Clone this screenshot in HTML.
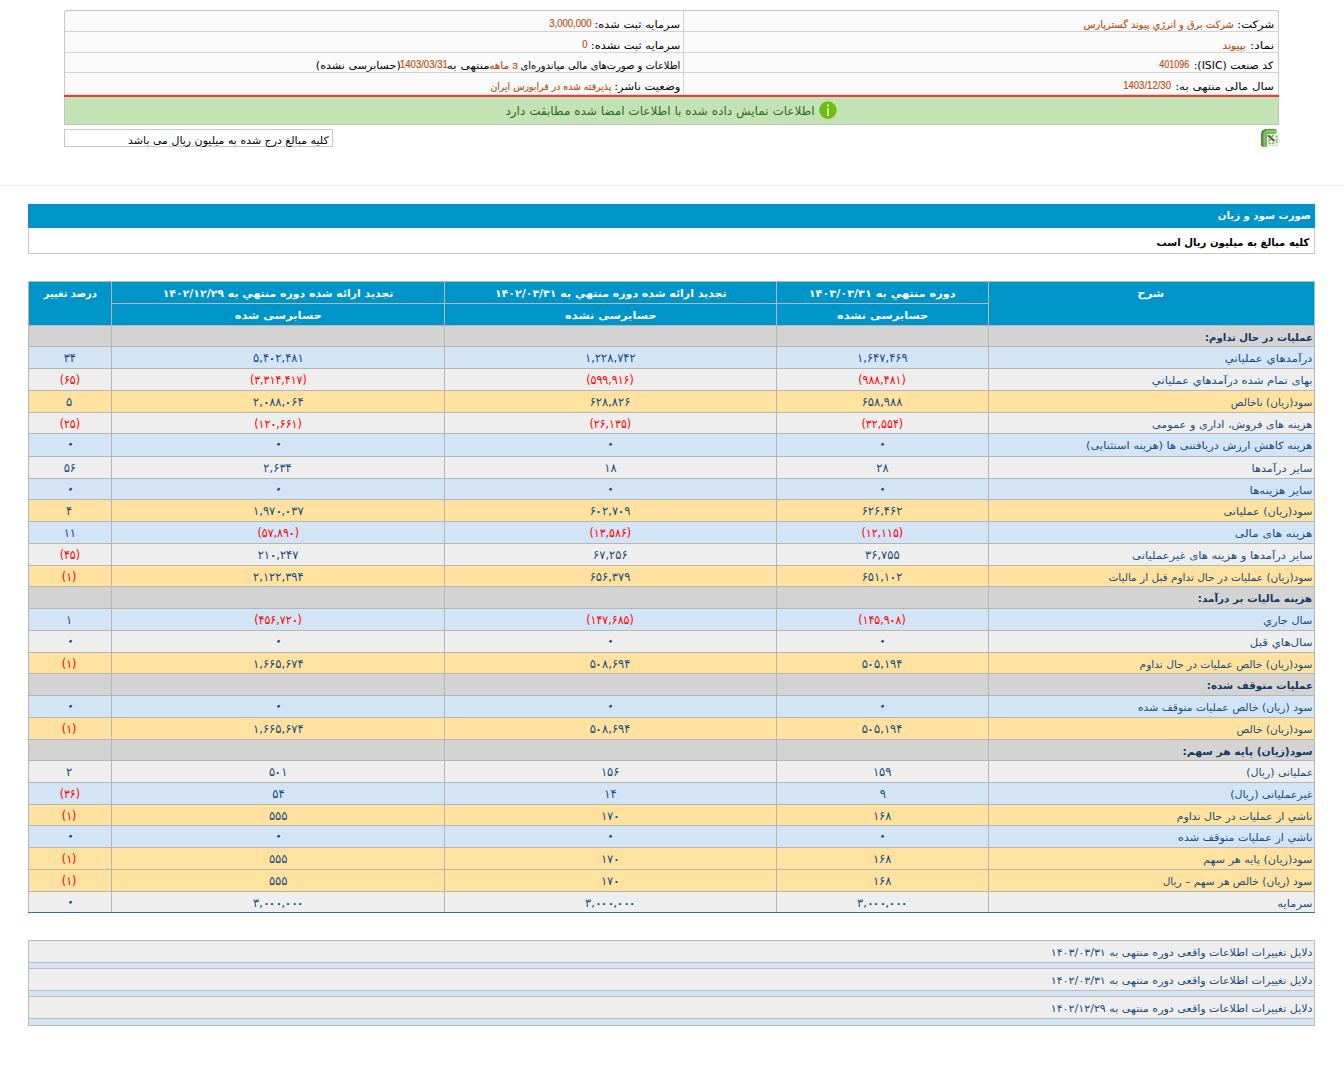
<!DOCTYPE html>
<html lang="fa" dir="rtl">
<head>
<meta charset="utf-8">
<title>صورت سود و زیان</title>
<style>
html,body{margin:0;padding:0;background:#fff}
body{width:1344px;height:1076px;position:relative;overflow:hidden;direction:rtl;
 font-family:"DejaVu Sans","Liberation Sans",sans-serif;font-size:11px;color:#000}
.abs{position:absolute;box-sizing:border-box}
.f{display:inline-block;white-space:nowrap;transform-origin:50% 50%}
.lat{font-family:"Liberation Sans","DejaVu Sans",sans-serif}
#info{left:64px;top:10px;width:1215px;height:85px;border:1px solid #c9c9c9;border-bottom-color:#d9d9d9;border-radius:3px 3px 0 0;background:#fafafa}
#info .r{position:absolute;left:0;right:0;height:1px;background:#d4d4d4}
#info .c{position:absolute;white-space:nowrap;line-height:20px;height:20px}
#info .l{font-size:10.2px;color:#000}
#info .v{color:#bd4b0c;font-size:10px;-webkit-text-stroke:0.15px #bd4b0c}
#info .v.n{font-size:10.6px}
#red{left:64px;top:95px;width:1215px;height:2px;background:#f03a3a}
#ok{left:64px;top:97px;width:1215px;height:28px;background:#c3e3b5;border:1px solid #c2c2c2;border-top:0;font-size:11.6px;color:#2a6a1c}
#ok .c{position:absolute;left:0;top:0;width:1213px;height:27px;line-height:28px;text-align:center}
#ok svg{position:absolute;left:754px;top:4px}
#note{left:64px;top:129px;width:269px;height:18px;border:1px solid #c6c6c6;background:#fff;font-size:10.4px;line-height:20px;text-align:center}
#xl{left:1261px;top:129px}
#hr{left:0;top:185px;width:1344px;height:1px;background:#ececec}
#title{left:28px;top:204px;width:1287px;height:24px;background:#0095c9;color:#fff;font-weight:bold;font-size:10.4px;line-height:23px;text-align:center}
#sub{left:28px;top:228px;width:1287px;height:26px;background:#fff;border:1px solid #c8c8c8;border-top:0;font-weight:bold;font-size:10.4px;line-height:28px;text-align:center}
#grid{left:28px;top:281px;width:1287px;background:#b6b6b6}
#grid .cell{position:absolute;box-sizing:border-box;white-space:nowrap;text-align:center;color:#184b7c;font-size:10.2px}
#grid .th{background:#0095c9;color:#fff;font-weight:bold;font-size:10.4px}
#grid .h{background:#d3d3d3}
#grid .h.d{font-weight:bold;color:#12395f}
#grid .b{background:#d3e4f5}
#grid .g{background:#eeeeee}
#grid .y{background:#ffe29f}
#grid .neg{color:#ff0000}
#grid .n{font-size:10.2px;direction:ltr;unicode-bidi:isolate}
#grid .zz{display:inline-block;transform:scale(1.5,1.3)}
#grid .z{font-size:11.8px;transform:translate(0.6px,-1.4px) scale(1.8) rotate(45deg)}
#grid .bl{position:absolute;left:0;width:1287px;height:1px;background:#2a70ab}
#rs{left:28px;top:940px;width:1287px;height:86px;background:#bdbdbd}
#rs div{position:absolute;left:1px;right:1px;box-sizing:border-box}
#rs .t{background:#eeeeee;color:#184b7c;font-size:10.2px;text-align:center;white-space:nowrap}
#rs .s{background:#d3e4f5}
</style>
</head>
<body>
<div id="info" class="abs">
<div class="r" style="top:20px"></div><div class="r" style="top:41px"></div><div class="r" style="top:61px"></div>
<div class="abs" style="left:618px;top:0;width:1px;height:83px;background:#d4d4d4"></div>
<div class="c l" style="left:0;width:1213px;top:0px;height:20px;line-height:27px;text-align:center"><span id="i1l" class="f " style="transform:translateX(584.52px) scaleX(1.1343)">شرکت:</span></div>
<div class="c v" style="left:0;width:1213px;top:0px;height:20px;line-height:27px;text-align:center"><span id="i1v" class="f " style="transform:translateX(487.15px) scaleX(0.9818)">شرکت برق و انرژي پيوند گسترپارس</span></div>
<div class="c l" style="left:0;width:1213px;top:21px;height:20px;line-height:27px;text-align:center"><span id="i2l" class="f " style="transform:translateX(590.16px) scaleX(1.2143)">نماد:</span></div>
<div class="c v" style="left:0;width:1213px;top:21px;height:20px;line-height:27px;text-align:center"><span id="i2v" class="f " style="transform:translateX(563.27px) scaleX(1.0616)">بپیوند</span></div>
<div class="c l" style="left:0;width:1213px;top:42px;height:19px;line-height:25px;text-align:center"><span id="i3l" class="f " style="transform:translateX(562.31px) scaleX(1.0707)">کد صنعت (ISIC):</span></div>
<div class="c v n" style="left:0;width:1213px;top:42px;height:19px;line-height:25px;text-align:center"><span id="i3v" class="f lat" style="transform:translate(502.52px,-1.1px) scaleX(0.8428)">401096</span></div>
<div class="c l" style="left:0;width:1213px;top:62px;height:21px;line-height:27px;text-align:center"><span id="i4l" class="f " style="transform:translateX(552.80px) scaleX(1.1560)">سال مالی منتهی به:</span></div>
<div class="c v n" style="left:0;width:1213px;top:62px;height:21px;line-height:27px;text-align:center"><span id="i4v" class="f lat" style="transform:translate(475.56px,-1.1px) scaleX(0.9013)">1403/12/30</span></div>
<div class="c l" style="left:0;width:1213px;top:0px;height:20px;line-height:27px;text-align:center"><span id="j1l" class="f " style="transform:translateX(-33.78px) scaleX(1.1256)">سرمایه ثبت شده:</span></div>
<div class="c v n" style="left:0;width:1213px;top:0px;height:20px;line-height:27px;text-align:center"><span id="j1v" class="f lat" style="transform:translate(-101.12px,-1.1px) scaleX(0.8982)">3,000,000</span></div>
<div class="c l" style="left:0;width:1213px;top:21px;height:20px;line-height:27px;text-align:center"><span id="j2l" class="f " style="transform:translateX(-36.17px) scaleX(1.1271)">سرمایه ثبت نشده:</span></div>
<div class="c v n" style="left:0;width:1213px;top:21px;height:20px;line-height:27px;text-align:center"><span id="j2v" class="f lat" style="transform:translate(-87.16px,-1.1px) scaleX(0.8982)">0</span></div>
<div class="c l" style="left:0;width:1213px;top:42px;height:19px;line-height:25px;text-align:center"><span id="j3a" class="f " style="transform:translateX(-70.88px) scaleX(0.9724)">اطلاعات و صورت‌های مالی میاندوره‌ای</span></div>
<div class="c v" style="left:0;width:1213px;top:42px;height:19px;line-height:25px;text-align:center"><span id="j3b" class="f " style="transform:translateX(-168.22px) scaleX(1.0405)"><span class="lat" style="font-size:9.8px">3</span> ماهه</span></div>
<div class="c l" style="left:0;width:1213px;top:42px;height:19px;line-height:25px;text-align:center"><span id="j3c" class="f " style="transform:translateX(-202.92px) scaleX(1.1869)">منتهی به</span></div>
<div class="c v n" style="left:0;width:1213px;top:42px;height:19px;line-height:25px;text-align:center"><span id="j3d" class="f lat" style="transform:translate(-247.65px,-1.1px) scaleX(0.9026)">1403/03/31</span></div>
<div class="c l" style="left:0;width:1213px;top:42px;height:19px;line-height:25px;text-align:center"><span id="j3e" class="f " style="transform:translateX(-313.58px) scaleX(1.0917)">(حسابرسی نشده)</span></div>
<div class="c l" style="left:0;width:1213px;top:62px;height:21px;line-height:27px;text-align:center"><span id="j4l" class="f " style="transform:translateX(-23.93px) scaleX(1.1326)">وضعیت ناشر:</span></div>
<div class="c v" style="left:0;width:1213px;top:62px;height:21px;line-height:27px;text-align:center"><span id="j4v" class="f " style="transform:translateX(-120.94px) scaleX(0.9330)">پذیرفته شده در فرابورس ایران</span></div>
</div>
<div id="red" class="abs"></div>
<div id="ok" class="abs"><div class="c"><span id="tok" class="f " style="transform:translateX(-11.02px) scaleX(1.0371)">اطلاعات نمایش داده شده با اطلاعات امضا شده مطابقت دارد</span></div><svg width="19" height="19" viewBox="0 0 19 19"><circle cx="8.9" cy="9.1" r="8.8" fill="#6dbd14"/><rect x="8" y="7.1" width="1.8" height="8" rx="0.9" fill="#fff" fill-opacity="0.88"/><circle cx="8.9" cy="4.4" r="1.05" fill="#fff" fill-opacity="0.9"/></svg></div>
<div id="note" class="abs"><span id="tnote" class="f " style="transform:translateX(29.44px) scaleX(1.0564)">کلیه مبالغ درج شده به میلیون ریال می باشد</span></div>
<svg id="xl" class="abs" width="18" height="18" viewBox="0 0 18 18">
<rect x="5.2" y="4.4" width="12.6" height="13.4" fill="#e6f9dc"/>
<path d="M0.2 16.6 V5.4 Q0.2 0.3 5.4 0.3 H14.2 Q16.4 0.6 15.6 2.8 Q15 4.6 13.6 4.6 H6.6 Q5.5 4.6 5.5 6 V17.7 H1.6 Q0.2 17.7 0.2 16.6Z" fill="#3f8e20"/>
<path d="M1.5 17.7 V5.6 Q1.6 1.6 5.6 1.5 H15.9 Q15.9 2.2 15.6 2.8 Q15 4.6 13.6 4.6 H6.6 Q5.5 4.6 5.5 6 V17.7Z" fill="#64a948"/>
<path d="M2.8 17.7 V5.8 Q2.9 2.6 5.8 2.5 H15.7 Q15 4.6 13.6 4.6 H6.6 Q5.5 4.6 5.5 6 V17.7Z" fill="#86c170"/>
<path d="M4.2 17.7 V6 Q4.3 3.6 6.2 3.5 H15.2 Q14.6 4.6 13.6 4.6 H6.6 Q5.5 4.6 5.5 6 V17.7Z" fill="#74aa5d"/>
<path d="M5.4 1.2 H15.6 Q15.9 2 15.7 2.5 H5.4Z" fill="#a3d88f"/>
<path d="M0.6 16.8 V5.4 Q0.7 0.8 5.4 0.7 H14.4" fill="none" stroke="#3a7a1e" stroke-width="0.8" stroke-opacity="0.8"/>
<path d="M7.6 6.8 L12.8 11.6" stroke="#48693a" stroke-width="2.1" stroke-linecap="round"/>
<path d="M12 6.6 L10.6 8 M9.2 10.4 L7.8 11.8" stroke="#7d9b70" stroke-width="1.4" stroke-linecap="round"/>
<path d="M14.6 7.6 h2.2 M14.6 10.4 h2.2 M14.6 13.2 h2.2 M7.6 14.2 h2.2 M10.8 14.2 h2.4" stroke="#94ac88" stroke-width="1.5"/>
<path d="M7.6 16.4 h2.2 M10.8 16.4 h2.4 M14.6 16.2 h2.2" stroke="#cfdccb" stroke-width="1.2"/>
</svg>
<div id="hr" class="abs"></div>
<div id="title" class="abs"><span id="ttitle" class="f " style="transform:translateX(592.77px) scaleX(0.9771)">صورت سود و زیان</span></div>
<div id="sub" class="abs"><span id="tsub" class="f " style="transform:translateX(561.46px) scaleX(0.9731)">کلیه مبالغ به میلیون ریال است</span></div>
<div id="grid" class="abs" style="height:632px">
<div class="cell th" style="left:961px;top:1px;width:325px;height:43px;line-height:22px"><span id="hd" class="f " style="transform:translateX(-0.29px) scaleX(1.1133)">شرح</span></div>
<div class="cell th" style="left:749px;top:1px;width:211px;height:21px;line-height:22px"><span id="h1a" class="f " style="transform:translateX(-0.71px) scaleX(1.0824)">دوره منتهي به ۱۴۰۳/۰۳/۳۱</span></div>
<div class="cell th" style="left:749px;top:23px;width:211px;height:21px;line-height:22px"><span id="h1b" class="f " style="transform:translateX(-0.07px) scaleX(1.0955)">حسابرسی نشده</span></div>
<div class="cell th" style="left:417px;top:1px;width:331px;height:21px;line-height:22px"><span id="h2a" class="f " style="transform:translateX(0.02px) scaleX(1.0558)">تجدید ارائه شده دوره منتهي به ۱۴۰۲/۰۳/۳۱</span></div>
<div class="cell th" style="left:417px;top:23px;width:331px;height:21px;line-height:22px"><span id="h2b" class="f " style="transform:translateX(0.15px) scaleX(1.0984)">حسابرسی نشده</span></div>
<div class="cell th" style="left:84px;top:1px;width:332px;height:21px;line-height:22px"><span id="h3a" class="f " style="transform:translateX(0.30px) scaleX(1.0511)">تجدید ارائه شده دوره منتهي به ۱۴۰۲/۱۲/۲۹</span></div>
<div class="cell th" style="left:84px;top:23px;width:332px;height:21px;line-height:22px"><span id="h3b" class="f " style="transform:translateX(0.70px) scaleX(1.1030)">حسابرسی شده</span></div>
<div class="cell th" style="left:1px;top:1px;width:82px;height:43px;line-height:22px"><span id="hp" class="f " style="transform:translateX(0.53px) scaleX(0.9528)">درصد تغییر</span></div>
<div class="cell h d" style="left:961px;top:45px;width:325px;height:20px;line-height:23px"><span id="d0" class="f " style="transform:translateX(107.42px) scaleX(0.9881)">عملیات در حال تداوم:</span></div>
<div class="cell h" style="left:749px;top:45px;width:211px;height:20px;line-height:23px"></div>
<div class="cell h" style="left:417px;top:45px;width:331px;height:20px;line-height:23px"></div>
<div class="cell h" style="left:84px;top:45px;width:332px;height:20px;line-height:23px"></div>
<div class="cell h" style="left:1px;top:45px;width:82px;height:20px;line-height:23px"></div>
<div class="cell b d" style="left:961px;top:66px;width:325px;height:21px;line-height:23px"><span id="d1" class="f " style="transform:translateX(116.73px) scaleX(1.1592)">درآمدهاي عملياتي</span></div>
<div class="cell b" style="left:749px;top:66px;width:211px;height:21px;line-height:23px"><span class="f n" style="transform:translate(0.0px,-0.7px) scale(1.130,1.15)">۱,۶۴۷,۴۶۹</span></div>
<div class="cell b" style="left:417px;top:66px;width:331px;height:21px;line-height:23px"><span class="f n" style="transform:translate(0.0px,-0.7px) scale(1.130,1.15)">۱,۲۲۸,۷۴۲</span></div>
<div class="cell b" style="left:84px;top:66px;width:332px;height:21px;line-height:23px"><span class="f n" style="transform:translate(0.0px,-0.7px) scale(1.130,1.15)">۵,۴<span class="zz">۰</span>۲,۴۸۱</span></div>
<div class="cell b" style="left:1px;top:66px;width:82px;height:21px;line-height:23px"><span class="f n" style="transform:translate(-0.6px,-0.7px) scale(1.130,1.15)">۳۴</span></div>
<div class="cell g d" style="left:961px;top:88px;width:325px;height:21px;line-height:23px"><span id="d2" class="f " style="transform:translateX(80.52px) scaleX(1.1377)">بهای تمام شده درآمدهاي عملياتي</span></div>
<div class="cell g neg" style="left:749px;top:88px;width:211px;height:21px;line-height:23px"><span class="f n" style="transform:translate(0.0px,-0.7px) scale(1.079,1.15)">(۹۸۸,۴۸۱)</span></div>
<div class="cell g neg" style="left:417px;top:88px;width:331px;height:21px;line-height:23px"><span class="f n" style="transform:translate(0.0px,-0.7px) scale(1.079,1.15)">(۵۹۹,۹۱۶)</span></div>
<div class="cell g neg" style="left:84px;top:88px;width:332px;height:21px;line-height:23px"><span class="f n" style="transform:translate(0.0px,-0.7px) scale(1.079,1.15)">(۳,۳۱۴,۴۱۷)</span></div>
<div class="cell g neg" style="left:1px;top:88px;width:82px;height:21px;line-height:23px"><span class="f n" style="transform:translate(-0.6px,-0.7px) scale(1.079,1.15)">(۶۵)</span></div>
<div class="cell y d" style="left:961px;top:110px;width:325px;height:21px;line-height:23px"><span id="d3" class="f " style="transform:translateX(120.13px) scaleX(1.0342)">سود(زيان) ناخالص</span></div>
<div class="cell y" style="left:749px;top:110px;width:211px;height:21px;line-height:23px"><span class="f n" style="transform:translate(0.0px,-0.7px) scale(1.130,1.15)">۶۵۸,۹۸۸</span></div>
<div class="cell y" style="left:417px;top:110px;width:331px;height:21px;line-height:23px"><span class="f n" style="transform:translate(0.0px,-0.7px) scale(1.130,1.15)">۶۲۸,۸۲۶</span></div>
<div class="cell y" style="left:84px;top:110px;width:332px;height:21px;line-height:23px"><span class="f n" style="transform:translate(0.0px,-0.7px) scale(1.130,1.15)">۲,<span class="zz">۰</span>۸۸,<span class="zz">۰</span>۶۴</span></div>
<div class="cell y" style="left:1px;top:110px;width:82px;height:21px;line-height:23px"><span class="f n" style="transform:translate(-0.6px,-0.7px) scale(1.130,1.15)">۵</span></div>
<div class="cell g d" style="left:961px;top:132px;width:325px;height:20px;line-height:23px"><span id="d4" class="f " style="transform:translateX(80.41px) scaleX(1.1033)">هزينه هاى فروش، ادارى و عمومى</span></div>
<div class="cell g neg" style="left:749px;top:132px;width:211px;height:20px;line-height:23px"><span class="f n" style="transform:translate(0.0px,-0.7px) scale(1.079,1.15)">(۳۲,۵۵۴)</span></div>
<div class="cell g neg" style="left:417px;top:132px;width:331px;height:20px;line-height:23px"><span class="f n" style="transform:translate(0.0px,-0.7px) scale(1.079,1.15)">(۲۶,۱۳۵)</span></div>
<div class="cell g neg" style="left:84px;top:132px;width:332px;height:20px;line-height:23px"><span class="f n" style="transform:translate(0.0px,-0.7px) scale(1.079,1.15)">(۱۲<span class="zz">۰</span>,۶۶۱)</span></div>
<div class="cell g neg" style="left:1px;top:132px;width:82px;height:20px;line-height:23px"><span class="f n" style="transform:translate(-0.6px,-0.7px) scale(1.079,1.15)">(۲۵)</span></div>
<div class="cell b d" style="left:961px;top:153px;width:325px;height:22px;line-height:23px"><span id="d5" class="f " style="transform:translateX(47.23px) scaleX(1.1202)">هزینه کاهش ارزش دریافتنی ها (هزینه استثنایی)</span></div>
<div class="cell b" style="left:749px;top:153px;width:211px;height:22px;line-height:23px"><span class="f z">۰</span></div>
<div class="cell b" style="left:417px;top:153px;width:331px;height:22px;line-height:23px"><span class="f z">۰</span></div>
<div class="cell b" style="left:84px;top:153px;width:332px;height:22px;line-height:23px"><span class="f z">۰</span></div>
<div class="cell b" style="left:1px;top:153px;width:82px;height:22px;line-height:23px"><span class="f z">۰</span></div>
<div class="cell g d" style="left:961px;top:176px;width:325px;height:21px;line-height:23px"><span id="d6" class="f " style="transform:translateX(130.55px) scaleX(1.1110)">ساير درآمدها</span></div>
<div class="cell g" style="left:749px;top:176px;width:211px;height:21px;line-height:23px"><span class="f n" style="transform:translate(0.0px,-0.7px) scale(1.130,1.15)">۲۸</span></div>
<div class="cell g" style="left:417px;top:176px;width:331px;height:21px;line-height:23px"><span class="f n" style="transform:translate(0.0px,-0.7px) scale(1.130,1.15)">۱۸</span></div>
<div class="cell g" style="left:84px;top:176px;width:332px;height:21px;line-height:23px"><span class="f n" style="transform:translate(0.0px,-0.7px) scale(1.130,1.15)">۲,۶۳۴</span></div>
<div class="cell g" style="left:1px;top:176px;width:82px;height:21px;line-height:23px"><span class="f n" style="transform:translate(-0.6px,-0.7px) scale(1.130,1.15)">۵۶</span></div>
<div class="cell b d" style="left:961px;top:198px;width:325px;height:20px;line-height:23px"><span id="d7" class="f " style="transform:translateX(129.92px) scaleX(1.1624)">سایر هزینه‌ها</span></div>
<div class="cell b" style="left:749px;top:198px;width:211px;height:20px;line-height:23px"><span class="f z">۰</span></div>
<div class="cell b" style="left:417px;top:198px;width:331px;height:20px;line-height:23px"><span class="f z">۰</span></div>
<div class="cell b" style="left:84px;top:198px;width:332px;height:20px;line-height:23px"><span class="f z">۰</span></div>
<div class="cell b" style="left:1px;top:198px;width:82px;height:20px;line-height:23px"><span class="f z">۰</span></div>
<div class="cell y d" style="left:961px;top:219px;width:325px;height:21px;line-height:23px"><span id="d8" class="f " style="transform:translateX(116.59px) scaleX(1.1010)">سود(زيان) عملياتى</span></div>
<div class="cell y" style="left:749px;top:219px;width:211px;height:21px;line-height:23px"><span class="f n" style="transform:translate(0.0px,-0.7px) scale(1.130,1.15)">۶۲۶,۴۶۲</span></div>
<div class="cell y" style="left:417px;top:219px;width:331px;height:21px;line-height:23px"><span class="f n" style="transform:translate(0.0px,-0.7px) scale(1.130,1.15)">۶<span class="zz">۰</span>۲,۷<span class="zz">۰</span>۹</span></div>
<div class="cell y" style="left:84px;top:219px;width:332px;height:21px;line-height:23px"><span class="f n" style="transform:translate(0.0px,-0.7px) scale(1.130,1.15)">۱,۹۷<span class="zz">۰</span>,<span class="zz">۰</span>۳۷</span></div>
<div class="cell y" style="left:1px;top:219px;width:82px;height:21px;line-height:23px"><span class="f n" style="transform:translate(-0.6px,-0.7px) scale(1.130,1.15)">۴</span></div>
<div class="cell b d" style="left:961px;top:241px;width:325px;height:21px;line-height:23px"><span id="d9" class="f " style="transform:translateX(121.84px) scaleX(1.1834)">هزينه هاى مالى</span></div>
<div class="cell b neg" style="left:749px;top:241px;width:211px;height:21px;line-height:23px"><span class="f n" style="transform:translate(0.0px,-0.7px) scale(1.079,1.15)">(۱۲,۱۱۵)</span></div>
<div class="cell b neg" style="left:417px;top:241px;width:331px;height:21px;line-height:23px"><span class="f n" style="transform:translate(0.0px,-0.7px) scale(1.079,1.15)">(۱۳,۵۸۶)</span></div>
<div class="cell b neg" style="left:84px;top:241px;width:332px;height:21px;line-height:23px"><span class="f n" style="transform:translate(0.0px,-0.7px) scale(1.079,1.15)">(۵۷,۸۹<span class="zz">۰</span>)</span></div>
<div class="cell b" style="left:1px;top:241px;width:82px;height:21px;line-height:23px"><span class="f n" style="transform:translate(-0.6px,-0.7px) scale(1.130,1.15)">۱۱</span></div>
<div class="cell g d" style="left:961px;top:263px;width:325px;height:21px;line-height:23px"><span id="d10" class="f " style="transform:translateX(71.13px) scaleX(1.1390)">ساير درآمدها و هزينه هاى غيرعملياتى</span></div>
<div class="cell g" style="left:749px;top:263px;width:211px;height:21px;line-height:23px"><span class="f n" style="transform:translate(0.0px,-0.7px) scale(1.130,1.15)">۳۶,۷۵۵</span></div>
<div class="cell g" style="left:417px;top:263px;width:331px;height:21px;line-height:23px"><span class="f n" style="transform:translate(0.0px,-0.7px) scale(1.130,1.15)">۶۷,۲۵۶</span></div>
<div class="cell g" style="left:84px;top:263px;width:332px;height:21px;line-height:23px"><span class="f n" style="transform:translate(0.0px,-0.7px) scale(1.130,1.15)">۲۱<span class="zz">۰</span>,۲۴۷</span></div>
<div class="cell g neg" style="left:1px;top:263px;width:82px;height:21px;line-height:23px"><span class="f n" style="transform:translate(-0.6px,-0.7px) scale(1.079,1.15)">(۴۵)</span></div>
<div class="cell y d" style="left:961px;top:285px;width:325px;height:20px;line-height:23px"><span id="d11" class="f " style="transform:translateX(58.56px) scaleX(1.0314)">سود(زيان) عمليات در حال تداوم قبل از ماليات</span></div>
<div class="cell y" style="left:749px;top:285px;width:211px;height:20px;line-height:23px"><span class="f n" style="transform:translate(0.0px,-0.7px) scale(1.130,1.15)">۶۵۱,۱<span class="zz">۰</span>۲</span></div>
<div class="cell y" style="left:417px;top:285px;width:331px;height:20px;line-height:23px"><span class="f n" style="transform:translate(0.0px,-0.7px) scale(1.130,1.15)">۶۵۶,۳۷۹</span></div>
<div class="cell y" style="left:84px;top:285px;width:332px;height:20px;line-height:23px"><span class="f n" style="transform:translate(0.0px,-0.7px) scale(1.130,1.15)">۲,۱۲۲,۳۹۴</span></div>
<div class="cell y neg" style="left:1px;top:285px;width:82px;height:20px;line-height:23px"><span class="f n" style="transform:translate(-0.6px,-0.7px) scale(1.079,1.15)">(۱)</span></div>
<div class="cell h d" style="left:961px;top:306px;width:325px;height:21px;line-height:23px"><span id="d12" class="f " style="transform:translateX(103.25px) scaleX(1.0263)">هزینه مالیات بر درآمد:</span></div>
<div class="cell h" style="left:749px;top:306px;width:211px;height:21px;line-height:23px"></div>
<div class="cell h" style="left:417px;top:306px;width:331px;height:21px;line-height:23px"></div>
<div class="cell h" style="left:84px;top:306px;width:332px;height:21px;line-height:23px"></div>
<div class="cell h" style="left:1px;top:306px;width:82px;height:21px;line-height:23px"></div>
<div class="cell b d" style="left:961px;top:328px;width:325px;height:21px;line-height:23px"><span id="d13" class="f " style="transform:translateX(136.53px) scaleX(1.1069)">سال جاري</span></div>
<div class="cell b neg" style="left:749px;top:328px;width:211px;height:21px;line-height:23px"><span class="f n" style="transform:translate(0.0px,-0.7px) scale(1.079,1.15)">(۱۴۵,۹<span class="zz">۰</span>۸)</span></div>
<div class="cell b neg" style="left:417px;top:328px;width:331px;height:21px;line-height:23px"><span class="f n" style="transform:translate(0.0px,-0.7px) scale(1.079,1.15)">(۱۴۷,۶۸۵)</span></div>
<div class="cell b neg" style="left:84px;top:328px;width:332px;height:21px;line-height:23px"><span class="f n" style="transform:translate(0.0px,-0.7px) scale(1.079,1.15)">(۴۵۶,۷۲<span class="zz">۰</span>)</span></div>
<div class="cell b" style="left:1px;top:328px;width:82px;height:21px;line-height:23px"><span class="f n" style="transform:translate(-0.6px,-0.7px) scale(1.130,1.15)">۱</span></div>
<div class="cell g d" style="left:961px;top:350px;width:325px;height:21px;line-height:23px"><span id="d14" class="f " style="transform:translateX(129.99px) scaleX(1.1518)">سال‌هاي قبل</span></div>
<div class="cell g" style="left:749px;top:350px;width:211px;height:21px;line-height:23px"><span class="f z">۰</span></div>
<div class="cell g" style="left:417px;top:350px;width:331px;height:21px;line-height:23px"><span class="f z">۰</span></div>
<div class="cell g" style="left:84px;top:350px;width:332px;height:21px;line-height:23px"><span class="f z">۰</span></div>
<div class="cell g" style="left:1px;top:350px;width:82px;height:21px;line-height:23px"><span class="f z">۰</span></div>
<div class="cell y d" style="left:961px;top:372px;width:325px;height:20px;line-height:23px"><span id="d15" class="f " style="transform:translateX(74.24px) scaleX(1.0446)">سود(زيان) خالص عمليات در حال تداوم</span></div>
<div class="cell y" style="left:749px;top:372px;width:211px;height:20px;line-height:23px"><span class="f n" style="transform:translate(0.0px,-0.7px) scale(1.130,1.15)">۵<span class="zz">۰</span>۵,۱۹۴</span></div>
<div class="cell y" style="left:417px;top:372px;width:331px;height:20px;line-height:23px"><span class="f n" style="transform:translate(0.0px,-0.7px) scale(1.130,1.15)">۵<span class="zz">۰</span>۸,۶۹۴</span></div>
<div class="cell y" style="left:84px;top:372px;width:332px;height:20px;line-height:23px"><span class="f n" style="transform:translate(0.0px,-0.7px) scale(1.130,1.15)">۱,۶۶۵,۶۷۴</span></div>
<div class="cell y neg" style="left:1px;top:372px;width:82px;height:20px;line-height:23px"><span class="f n" style="transform:translate(-0.6px,-0.7px) scale(1.079,1.15)">(۱)</span></div>
<div class="cell h d" style="left:961px;top:393px;width:325px;height:21px;line-height:23px"><span id="d16" class="f " style="transform:translateX(108.42px) scaleX(1.0111)">عملیات متوقف شده:</span></div>
<div class="cell h" style="left:749px;top:393px;width:211px;height:21px;line-height:23px"></div>
<div class="cell h" style="left:417px;top:393px;width:331px;height:21px;line-height:23px"></div>
<div class="cell h" style="left:84px;top:393px;width:332px;height:21px;line-height:23px"></div>
<div class="cell h" style="left:1px;top:393px;width:82px;height:21px;line-height:23px"></div>
<div class="cell b d" style="left:961px;top:415px;width:325px;height:21px;line-height:23px"><span id="d17" class="f " style="transform:translateX(73.56px) scaleX(1.0556)">سود (زيان) خالص عمليات متوقف شده</span></div>
<div class="cell b" style="left:749px;top:415px;width:211px;height:21px;line-height:23px"><span class="f z">۰</span></div>
<div class="cell b" style="left:417px;top:415px;width:331px;height:21px;line-height:23px"><span class="f z">۰</span></div>
<div class="cell b" style="left:84px;top:415px;width:332px;height:21px;line-height:23px"><span class="f z">۰</span></div>
<div class="cell b" style="left:1px;top:415px;width:82px;height:21px;line-height:23px"><span class="f z">۰</span></div>
<div class="cell y d" style="left:961px;top:437px;width:325px;height:21px;line-height:23px"><span id="d18" class="f " style="transform:translateX(122.99px) scaleX(1.0388)">سود(زيان) خالص</span></div>
<div class="cell y" style="left:749px;top:437px;width:211px;height:21px;line-height:23px"><span class="f n" style="transform:translate(0.0px,-0.7px) scale(1.130,1.15)">۵<span class="zz">۰</span>۵,۱۹۴</span></div>
<div class="cell y" style="left:417px;top:437px;width:331px;height:21px;line-height:23px"><span class="f n" style="transform:translate(0.0px,-0.7px) scale(1.130,1.15)">۵<span class="zz">۰</span>۸,۶۹۴</span></div>
<div class="cell y" style="left:84px;top:437px;width:332px;height:21px;line-height:23px"><span class="f n" style="transform:translate(0.0px,-0.7px) scale(1.130,1.15)">۱,۶۶۵,۶۷۴</span></div>
<div class="cell y neg" style="left:1px;top:437px;width:82px;height:21px;line-height:23px"><span class="f n" style="transform:translate(-0.6px,-0.7px) scale(1.079,1.15)">(۱)</span></div>
<div class="cell h d" style="left:961px;top:459px;width:325px;height:20px;line-height:23px"><span id="d19" class="f " style="transform:translateX(95.69px) scaleX(1.0507)">سود(زيان) پايه هر سهم:</span></div>
<div class="cell h" style="left:749px;top:459px;width:211px;height:20px;line-height:23px"></div>
<div class="cell h" style="left:417px;top:459px;width:331px;height:20px;line-height:23px"></div>
<div class="cell h" style="left:84px;top:459px;width:332px;height:20px;line-height:23px"></div>
<div class="cell h" style="left:1px;top:459px;width:82px;height:20px;line-height:23px"></div>
<div class="cell g d" style="left:961px;top:480px;width:325px;height:21px;line-height:23px"><span id="d20" class="f " style="transform:translateX(128.60px) scaleX(1.0734)">عملیاتی (ریال)</span></div>
<div class="cell g" style="left:749px;top:480px;width:211px;height:21px;line-height:23px"><span class="f n" style="transform:translate(0.0px,-0.7px) scale(1.130,1.15)">۱۵۹</span></div>
<div class="cell g" style="left:417px;top:480px;width:331px;height:21px;line-height:23px"><span class="f n" style="transform:translate(0.0px,-0.7px) scale(1.130,1.15)">۱۵۶</span></div>
<div class="cell g" style="left:84px;top:480px;width:332px;height:21px;line-height:23px"><span class="f n" style="transform:translate(0.0px,-0.7px) scale(1.130,1.15)">۵<span class="zz">۰</span>۱</span></div>
<div class="cell g" style="left:1px;top:480px;width:82px;height:21px;line-height:23px"><span class="f n" style="transform:translate(-0.6px,-0.7px) scale(1.130,1.15)">۲</span></div>
<div class="cell b d" style="left:961px;top:502px;width:325px;height:21px;line-height:23px"><span id="d21" class="f " style="transform:translateX(120.14px) scaleX(1.0782)">غيرعملياتى (ريال)</span></div>
<div class="cell b" style="left:749px;top:502px;width:211px;height:21px;line-height:23px"><span class="f n" style="transform:translate(0.0px,-0.7px) scale(1.130,1.15)">۹</span></div>
<div class="cell b" style="left:417px;top:502px;width:331px;height:21px;line-height:23px"><span class="f n" style="transform:translate(0.0px,-0.7px) scale(1.130,1.15)">۱۴</span></div>
<div class="cell b" style="left:84px;top:502px;width:332px;height:21px;line-height:23px"><span class="f n" style="transform:translate(0.0px,-0.7px) scale(1.130,1.15)">۵۴</span></div>
<div class="cell b neg" style="left:1px;top:502px;width:82px;height:21px;line-height:23px"><span class="f n" style="transform:translate(-0.6px,-0.7px) scale(1.079,1.15)">(۳۶)</span></div>
<div class="cell y d" style="left:961px;top:524px;width:325px;height:20px;line-height:23px"><span id="d22" class="f " style="transform:translateX(93.25px) scaleX(1.0725)">ناشي از عمليات در حال تداوم</span></div>
<div class="cell y" style="left:749px;top:524px;width:211px;height:20px;line-height:23px"><span class="f n" style="transform:translate(0.0px,-0.7px) scale(1.130,1.15)">۱۶۸</span></div>
<div class="cell y" style="left:417px;top:524px;width:331px;height:20px;line-height:23px"><span class="f n" style="transform:translate(0.0px,-0.7px) scale(1.130,1.15)">۱۷<span class="zz">۰</span></span></div>
<div class="cell y" style="left:84px;top:524px;width:332px;height:20px;line-height:23px"><span class="f n" style="transform:translate(0.0px,-0.7px) scale(1.130,1.15)">۵۵۵</span></div>
<div class="cell y neg" style="left:1px;top:524px;width:82px;height:20px;line-height:23px"><span class="f n" style="transform:translate(-0.6px,-0.7px) scale(1.079,1.15)">(۱)</span></div>
<div class="cell b d" style="left:961px;top:545px;width:325px;height:21px;line-height:23px"><span id="d23" class="f " style="transform:translateX(93.67px) scaleX(1.0908)">ناشي از عمليات متوقف شده</span></div>
<div class="cell b" style="left:749px;top:545px;width:211px;height:21px;line-height:23px"><span class="f z">۰</span></div>
<div class="cell b" style="left:417px;top:545px;width:331px;height:21px;line-height:23px"><span class="f z">۰</span></div>
<div class="cell b" style="left:84px;top:545px;width:332px;height:21px;line-height:23px"><span class="f z">۰</span></div>
<div class="cell b" style="left:1px;top:545px;width:82px;height:21px;line-height:23px"><span class="f z">۰</span></div>
<div class="cell y d" style="left:961px;top:567px;width:325px;height:21px;line-height:23px"><span id="d24" class="f " style="transform:translateX(105.98px) scaleX(1.0974)">سود(زيان) پايه هر سهم</span></div>
<div class="cell y" style="left:749px;top:567px;width:211px;height:21px;line-height:23px"><span class="f n" style="transform:translate(0.0px,-0.7px) scale(1.130,1.15)">۱۶۸</span></div>
<div class="cell y" style="left:417px;top:567px;width:331px;height:21px;line-height:23px"><span class="f n" style="transform:translate(0.0px,-0.7px) scale(1.130,1.15)">۱۷<span class="zz">۰</span></span></div>
<div class="cell y" style="left:84px;top:567px;width:332px;height:21px;line-height:23px"><span class="f n" style="transform:translate(0.0px,-0.7px) scale(1.130,1.15)">۵۵۵</span></div>
<div class="cell y neg" style="left:1px;top:567px;width:82px;height:21px;line-height:23px"><span class="f n" style="transform:translate(-0.6px,-0.7px) scale(1.079,1.15)">(۱)</span></div>
<div class="cell y d" style="left:961px;top:589px;width:325px;height:21px;line-height:23px"><span id="d25" class="f " style="transform:translateX(85.74px) scaleX(1.0433)">سود (زيان) خالص هر سهم – ريال</span></div>
<div class="cell y" style="left:749px;top:589px;width:211px;height:21px;line-height:23px"><span class="f n" style="transform:translate(0.0px,-0.7px) scale(1.130,1.15)">۱۶۸</span></div>
<div class="cell y" style="left:417px;top:589px;width:331px;height:21px;line-height:23px"><span class="f n" style="transform:translate(0.0px,-0.7px) scale(1.130,1.15)">۱۷<span class="zz">۰</span></span></div>
<div class="cell y" style="left:84px;top:589px;width:332px;height:21px;line-height:23px"><span class="f n" style="transform:translate(0.0px,-0.7px) scale(1.130,1.15)">۵۵۵</span></div>
<div class="cell y neg" style="left:1px;top:589px;width:82px;height:21px;line-height:23px"><span class="f n" style="transform:translate(-0.6px,-0.7px) scale(1.079,1.15)">(۱)</span></div>
<div class="cell g d" style="left:961px;top:611px;width:325px;height:20px;line-height:23px"><span id="d26" class="f " style="transform:translateX(143.41px) scaleX(1.1356)">سرمايه</span></div>
<div class="cell g" style="left:749px;top:611px;width:211px;height:20px;line-height:23px"><span class="f n" style="transform:translate(0.0px,-0.7px) scale(1.130,1.15)">۳,<span class="zz">۰</span><span class="zz">۰</span><span class="zz">۰</span>,<span class="zz">۰</span><span class="zz">۰</span><span class="zz">۰</span></span></div>
<div class="cell g" style="left:417px;top:611px;width:331px;height:20px;line-height:23px"><span class="f n" style="transform:translate(0.0px,-0.7px) scale(1.130,1.15)">۳,<span class="zz">۰</span><span class="zz">۰</span><span class="zz">۰</span>,<span class="zz">۰</span><span class="zz">۰</span><span class="zz">۰</span></span></div>
<div class="cell g" style="left:84px;top:611px;width:332px;height:20px;line-height:23px"><span class="f n" style="transform:translate(0.0px,-0.7px) scale(1.130,1.15)">۳,<span class="zz">۰</span><span class="zz">۰</span><span class="zz">۰</span>,<span class="zz">۰</span><span class="zz">۰</span><span class="zz">۰</span></span></div>
<div class="cell g" style="left:1px;top:611px;width:82px;height:20px;line-height:23px"><span class="f z">۰</span></div>
<div class="bl" style="top:631px"></div>
</div>
<div id="rs" class="abs">
<div class="t" style="top:1px;height:21px;line-height:23px"><span id="r1" class="f " style="transform:translateX(510.25px) scaleX(1.0875)">دلایل تغییرات اطلاعات واقعی دوره منتهی به ۱۴۰۳/۰۳/۳۱</span></div>
<div class="s" style="top:23px;height:5px"></div>
<div class="t" style="top:29px;height:21px;line-height:23px"><span id="r2" class="f " style="transform:translateX(510.25px) scaleX(1.0875)">دلایل تغییرات اطلاعات واقعی دوره منتهی به ۱۴۰۲/۰۳/۳۱</span></div>
<div class="s" style="top:51px;height:5px"></div>
<div class="t" style="top:57px;height:21px;line-height:23px"><span id="r3" class="f " style="transform:translateX(510.25px) scaleX(1.0875)">دلایل تغییرات اطلاعات واقعی دوره منتهی به ۱۴۰۲/۱۲/۲۹</span></div>
<div class="s" style="top:79px;height:6px"></div>
</div>
</body>
</html>
